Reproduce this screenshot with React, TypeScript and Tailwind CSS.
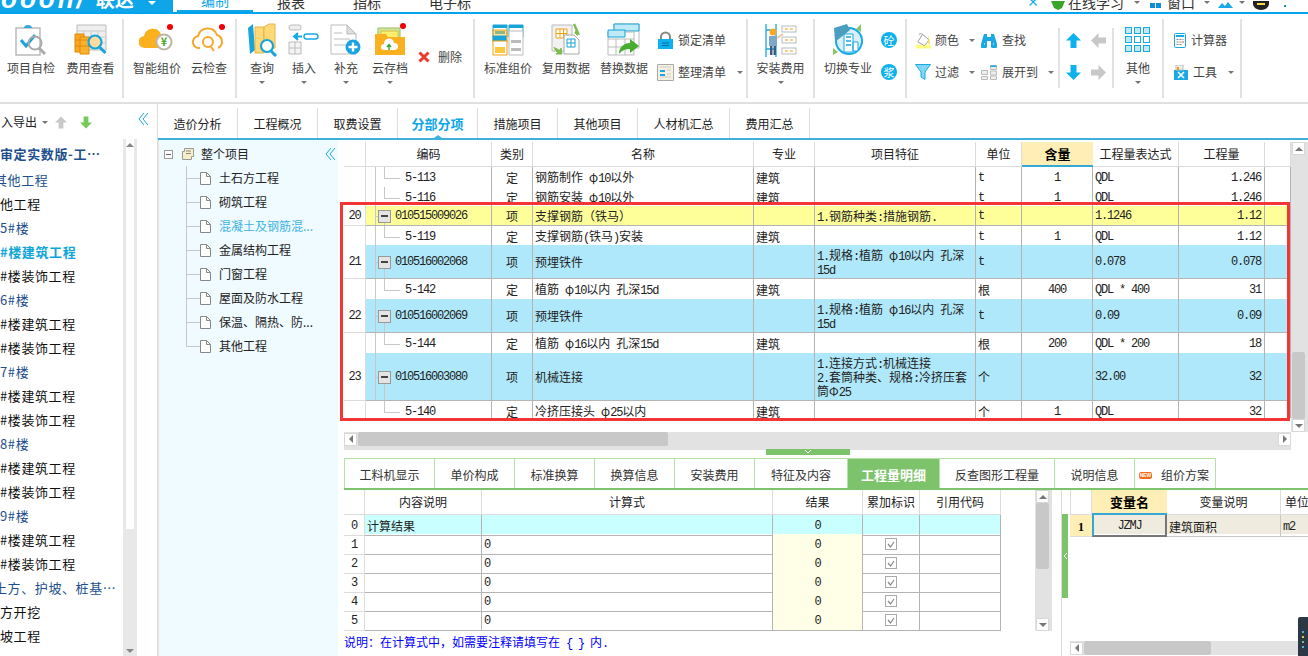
import { ReactNode } from "react";

// text in the grids: CJK at 12px, latin in a mono face squeezed to 6px per char
function Sun({ text }: { text: string }) {
  const parts = text.match(/[\x20-\x7e]+|[^\x20-\x7e]+/g) || [];
  return (
    <>
      {parts.map((p, i) =>
        /^[\x20-\x7e]/.test(p) ? (
          <span key={i} className="font-['Liberation_Mono',monospace] text-[12px] tracking-[-1.2px] whitespace-pre">
            {p}
          </span>
        ) : (
          <span key={i}>{p}</span>
        )
      )}
    </>
  );
}

const Caret = ({ className = "" }: { className?: string }) => (
  <span className={`inline-block w-0 h-0 border-x-[3px] border-t-[3px] border-x-transparent border-t-[#777] ${className}`} />
);

/* ---------- ribbon icons ---------- */
const Dot = ({ x, y }: { x: number; y: number }) => <circle cx={x} cy={y} r="3" fill="#f00000" />;

const IconCheck = () => (
  <svg width="34" height="34" viewBox="0 0 34 34" fill="none">
    <path d="M2 5h24v27H2z" fill="#fff" stroke="#bbb" strokeWidth="1.5" />
    <path d="M10 5c0-4 8-4 8 0z" fill="#29a9e0" />
    <path d="M7 17l5 6 9-11" stroke="#1aa3e0" strokeWidth="3" />
    <circle cx="21" cy="20" r="6.5" stroke="#aaa" strokeWidth="2" />
    <path d="M25 25l6 6" stroke="#aaa" strokeWidth="3" />
  </svg>
);
const IconFee = () => (
  <svg width="34" height="34" viewBox="0 0 34 34" fill="none">
    <path d="M3 2h29v25H3z" fill="#eee" stroke="#bbb" />
    <path d="M3 8h29M3 14h29M3 20h29M10 8v19M17 8v19M24 8v19" stroke="#ccc" />
    <path d="M1 11h9v18H1z" fill="#f9a825" stroke="#e08a00" />
    <path d="M6 14h9v17H6z" fill="#fbb030" stroke="#e08a00" />
    <path d="M1 17h14M1 23h14" stroke="#e08a00" />
    <circle cx="21" cy="19" r="6.5" fill="#fcdca0" stroke="#18a4d8" strokeWidth="2.2" />
    <path d="M25.5 24l6 6" stroke="#18a4d8" strokeWidth="3" />
  </svg>
);
const IconSmart = () => (
  <svg width="36" height="34" viewBox="0 0 36 34" fill="none">
    <path d="M6 25a6 6 0 0 1-1-12 9 9 0 0 1 17-2 7 7 0 0 1 8 7l-6 7z" fill="#fbb01f" />
    <circle cx="25" cy="19" r="7.5" fill="#fff" stroke="#bdb8a6" strokeWidth="2" />
    <text x="25" y="23" textAnchor="middle" fontSize="11" fill="#52a52b" fontWeight="700">¥</text>
    <Dot x={31} y={4} />
  </svg>
);
const IconCloudCheck = () => (
  <svg width="36" height="34" viewBox="0 0 36 34" fill="none">
    <path d="M9 25a6 6 0 0 1-2-12 10 10 0 0 1 19-1 7 7 0 0 1 1 13" stroke="#f7a72c" strokeWidth="2" />
    <circle cx="17" cy="19" r="5" stroke="#f7a72c" strokeWidth="2" />
    <path d="M20 24l3 4" stroke="#f7a72c" strokeWidth="2" />
    <Dot x={31} y={4} />
  </svg>
);
const IconBooks = () => (
  <svg width="32" height="34" viewBox="0 0 32 34" fill="none">
    <path d="M2 5l5-4 2 26-5 4z" fill="#18a4d8" />
    <path d="M9 4h9v26H9z" fill="#ffd978" stroke="#e5b34a" />
    <path d="M18 4l5-3h6v24H18z" fill="#ffd978" stroke="#e5b34a" />
    <circle cx="21" cy="23" r="6" fill="#fff" stroke="#18a4d8" strokeWidth="2.2" />
    <path d="M25 28l5 5" stroke="#18a4d8" strokeWidth="3" />
  </svg>
);
const IconInsert = () => (
  <svg width="32" height="32" viewBox="0 0 32 32" fill="none">
    <rect x="1" y="1" width="12" height="5" rx="2" fill="#eee" stroke="#bbb" />
    <rect x="16" y="10" width="14" height="5" rx="2.5" fill="#fff" stroke="#19a9e5" strokeWidth="1.4" />
    <path d="M14 12.5H7M10 9l-4 3.5L10 16" stroke="#19a9e5" strokeWidth="2" fill="#19a9e5" />
    <path d="M1 18h12v12H1zM1 24h12M7 18v12" stroke="#bbb" fill="#f4f4f4" />
  </svg>
);
const IconSupplement = () => (
  <svg width="34" height="34" viewBox="0 0 34 34" fill="none">
    <path d="M2 2h16l9 9v20H2z" fill="#fff" stroke="#bbb" />
    <path d="M18 2v9h9z" fill="#ddd" stroke="#bbb" />
    <path d="M5 10h8M5 16h16M5 22h12" stroke="#ddd" strokeWidth="2" />
    <circle cx="24" cy="24" r="7.5" fill="#1aa3e0" />
    <path d="M24 19.5v9M19.5 24h9" stroke="#fff" strokeWidth="2.4" />
  </svg>
);
const IconArchive = () => (
  <svg width="34" height="34" viewBox="0 0 34 34" fill="none">
    <path d="M5 5h22v14H5z" fill="#cfe8a0" stroke="#9dbb63" />
    <path d="M8 8h17v14H8z" fill="#ffef6e" stroke="#d9bc3a" />
    <path d="M2 11h11l2 3h17v18H2z" fill="#fbb01f" />
    <path d="M11 27a3 3 0 0 1 0-6 5 5 0 0 1 10-1 3.5 3.5 0 0 1 1 7z" fill="#fff" />
    <path d="M16 27v-5M14 24l2-2.5 2 2.5" stroke="#2aa52b" strokeWidth="1.3" />
    <Dot x={30} y={3} />
  </svg>
);
const IconTemplate = () => (
  <svg width="32" height="32" viewBox="0 0 32 32" fill="none">
    <path d="M1 1h14v12H1z" fill="#fff" stroke="#18a4d8" />
    <path d="M1 1h14v3H1zM3 7h10v3H3z" fill="#18a4d8" />
    <path d="M1 6h14v12H1z" fill="#ffc93d" fillOpacity=".5" stroke="#f0a010" />
    <path d="M17 1h14v12H17z" fill="#fff" stroke="#18a4d8" />
    <path d="M17 1h14v3H17zM19 7h10v3H19z" fill="#18a4d8" />
    <path d="M17 7h14v24H17z" fill="#fff" stroke="#bbb" />
    <path d="M19 16h10v3H19zM19 24h10v3H19z" fill="#bbb" />
    <path d="M1 12h13v5H1z" fill="#18a4d8" stroke="#18a4d8" />
    <path d="M1 17h14v14H1z" fill="#fff" stroke="#f0a010" />
    <path d="M3 23h10v6H3z" fill="#ffc93d" />
  </svg>
);
const IconReuse = () => (
  <svg width="32" height="34" viewBox="0 0 32 34" fill="none">
    <path d="M2 2h20v26H2z" fill="#f2f2f2" stroke="#bbb" />
    <path d="M6 6h11v9H6zM6 10.5h11M10 6v9M13.5 6v9" stroke="#f0a010" fill="#fff" />
    <path d="M14 12h10l5 5v14H14z" fill="#fff" stroke="#aaa" />
    <path d="M17 16h8v8h-8zM17 20h8M21 16v8" stroke="#18a4d8" />
    <path d="M24 1l4 9-3-1a14 14 0 0 1 3 3" stroke="#7dbb4f" strokeWidth="2.4" />
    <path d="M4 24a12 12 0 0 0 4 6l-2 1h6l-1-6-1 2" fill="#7dbb4f" stroke="#7dbb4f" />
  </svg>
);
const IconReplace = () => (
  <svg width="34" height="34" viewBox="0 0 34 34" fill="none">
    <path d="M7 1h25v24H7z" fill="#fff" stroke="#bbb" />
    <path d="M7 1h25v7H7z" fill="#bfe9f5" stroke="#18a4d8" />
    <path d="M1 9h26v23H1z" fill="#fff" stroke="#bbb" />
    <path d="M1 16h26M1 24h26M9 16v16M18 16v16" stroke="#bbb" />
    <path d="M1 7h17v7H1z" fill="#bfe9f5" stroke="#18a4d8" />
    <path d="M12 31c0-7 5-11 11-11v-4l9 7-9 7v-4c-4 0-8 1-11 5z" fill="#46ad2f" />
  </svg>
);
const IconLock = () => (
  <svg width="17" height="18" viewBox="0 0 17 18" fill="none">
    <path d="M4 9V6a4.5 4.5 0 0 1 9 0v3" stroke="#888" strokeWidth="2" />
    <path d="M1 8h15v10H1z" fill="#0db1ee" />
    <path d="M5 12h7M5 14.5h7" stroke="#0a6d99" strokeWidth="1.2" />
  </svg>
);
const IconTidy = () => (
  <svg width="17" height="17" viewBox="0 0 17 17" fill="none">
    <path d="M.5.5h16v16H.5z" fill="#f5f0e0" stroke="#aaa" />
    <path d="M3 3h11M3 13h11" stroke="#ccc" />
    <path d="M3 6h5v2H3zM3 10h5v2H3z" fill="#19a9e5" />
    <path d="M10 6h4M10 10h4" stroke="#ccc" />
  </svg>
);
const IconWorker = () => (
  <svg width="32" height="34" viewBox="0 0 32 34" fill="none">
    <path d="M1 1v33M11 1v33M1 7h10M1 26h10" stroke="#19a9e5" strokeWidth="1.3" />
    <rect x="17" y="3" width="14" height="6" fill="#fff" stroke="#bbb" />
    <rect x="17" y="14" width="14" height="6" fill="#fff" stroke="#bbb" />
    <rect x="17" y="25" width="14" height="6" fill="#fff" stroke="#bbb" />
    <path d="M20 6h3M25 6h3M20 17h3M25 17h3M20 28h3M25 28h3" stroke="#f0a010" />
    <circle cx="8" cy="9" r="3.5" fill="#f9a825" />
    <path d="M4 13h8v10H4z" fill="#7ea7c9" />
    <path d="M12 15l6-4" stroke="#e8c8a0" strokeWidth="2" />
    <path d="M5 23h2.5v9H5zM8.5 23H11v9H8.5z" fill="#3a5f85" />
  </svg>
);
const IconSwitch = () => (
  <svg width="34" height="34" viewBox="0 0 34 34" fill="none">
    <circle cx="18" cy="18" r="13" fill="#d9f0fa" stroke="#19a9e5" strokeWidth="2" />
    <path d="M3 5l13-4 3 6-15 12z" fill="#4c9ebf" />
    <path d="M13 11h9v18h-9zM22 19h5v9h-5z" fill="#fff" stroke="#19a9e5" />
    <path d="M15 14h5M15 18h5M15 22h5" stroke="#19a9e5" strokeWidth="1.5" />
    <path d="M30 1v8l-5-3zM2 32v-7l5 4z" fill="#8cc46b" />
  </svg>
);
const IconBucket = () => (
  <svg width="17" height="17" viewBox="0 0 17 17" fill="none">
    <path d="M1 13h16v4H1z" fill="#ffff80" />
    <path d="M8 2l7 6-5 6-7-4z" fill="#fff" stroke="#999" />
    <path d="M8 2a3 3 0 0 0-4 0" stroke="#999" />
    <path d="M14 2l2 10h-2z" fill="#ffd94a" />
  </svg>
);
const IconBinoculars = () => (
  <svg width="16" height="15" viewBox="0 0 16 15" fill="#19a9e5">
    <path d="M3 1h3v3h4V1h3l3 10a3 3 0 0 1-6 3V8H6v6a3 3 0 0 1-6-3z" />
    <path d="M3 11h1M12 11h1" stroke="#fff" />
  </svg>
);
const IconFunnel = () => (
  <svg width="16" height="16" viewBox="0 0 16 16" fill="none">
    <path d="M.5.5h15L10 8v7.5L6 13V8z" fill="#7fd6f5" stroke="#19a9e5" />
  </svg>
);
const IconExpand = () => (
  <svg width="16" height="15" viewBox="0 0 16 15" fill="none">
    <path d="M.5 5.5h6v4h-6zM.5 11.5h6v3h-6zM9.5.5h6v4h-6zM9.5 6h6v4h-6zM9.5 11h6v3.5h-6z" fill="#eee" stroke="#bbb" />
    <path d="M9.5.5h6V2h-6z" fill="#19a9e5" />
  </svg>
);
const Arrow = ({ dir, color }: { dir: "up" | "down" | "left" | "right"; color: string }) => {
  const rot = { up: "", down: "rotate-180", left: "-rotate-90", right: "rotate-90" }[dir];
  return (
    <svg width="15" height="15" viewBox="0 0 15 15" className={rot}>
      <path d="M7.5 0L15 7.5h-4.5V15h-6V7.5H0z" fill={color} />
    </svg>
  );
};
const IconOther = () => (
  <svg width="26" height="26" viewBox="0 0 26 26">
    {[0, 9, 18].map((y) =>
      [0, 9, 18].map((x) => (
        <rect key={`${x}-${y}`} x={x + 0.5} y={y + 0.5} width="6" height="6" fill={(x === 0 || y === 0 || y === 18) && !(x === 18 && y === 9) && !(y === 9 && x === 9) ? "#bfe9f5" : "#fff"} stroke="#19a9e5" />
      ))
    )}
  </svg>
);
const IconCalc = () => (
  <svg width="12" height="15" viewBox="0 0 12 15" fill="none">
    <rect x=".5" y=".5" width="11" height="14" rx="1" fill="#fff" stroke="#19a9e5" />
    <path d="M2 2h8v2H2z" fill="#19a9e5" />
    <path d="M2.5 6.5h2M5.5 6.5h2M8.5 6.5h1M2.5 9h2M5.5 9h2M8.5 9h1M2.5 11.5h2M5.5 11.5h2" stroke="#888" />
    <path d="M8.5 9h1" stroke="#f00" />
  </svg>
);
const IconTools = () => (
  <svg width="14" height="15" viewBox="0 0 14 15" fill="none">
    <path d="M0 5h14v10H0z" fill="#19a9e5" />
    <path d="M2 0h7v5H2z" fill="#eee" stroke="#bbb" />
    <path d="M4 2v3" stroke="#f0a010" strokeWidth="2" />
    <path d="M4 7l6 6M10 7l-6 6" stroke="#fff" strokeWidth="1.6" />
  </svg>
);
const IconDelete = () => (
  <svg width="12" height="12" viewBox="0 0 12 12">
    <path d="M1.5 1.5l9 9M10.5 1.5l-9 9" stroke="#ef3b2d" strokeWidth="3" />
  </svg>
);

/* ---------- ribbon pieces ---------- */
function Big({ icon, label, caret, w }: { icon: ReactNode; label: string; caret?: boolean; w: string }) {
  return (
    <div className={`flex flex-col items-center pt-[3px] ${w}`}>
      <div className="h-[35px] flex items-center justify-center">{icon}</div>
      <div className="mt-[3px] h-[16px] leading-[16px] whitespace-nowrap">{label}</div>
      {caret && <Caret className="mt-[5px]" />}
    </div>
  );
}

function Small({ icon, label, caret, gap = "gap-[4px]", caretGap = "ml-[7px]" }: { icon: ReactNode; label: string; caret?: boolean; gap?: string; caretGap?: string }) {
  return (
    <div className={`h-[20px] flex items-center whitespace-nowrap ${gap}`}>
      {icon}
      <span>{label}</span>
      {caret && <Caret className={caretGap} />}
    </div>
  );
}

function Ribbon() {
  return (
    <div className="flex h-[90px] pt-[5px] border-b-2 border-[#e0e0e0] text-[12px] text-[#444]">
      <div className="w-[124px] h-[79px] flex border-r-2 border-[#e2e2e2] pl-[1px]">
        <Big w="w-[60px]" icon={<IconCheck />} label="项目自检" />
        <Big w="w-[59px]" icon={<IconFee />} label="费用查看" />
      </div>
      <div className="w-[113px] h-[79px] flex border-r-2 border-[#e2e2e2] pl-[7px]">
        <Big w="w-[52px]" icon={<IconSmart />} label="智能组价" />
        <Big w="w-[52px]" icon={<IconCloudCheck />} label="云检查" />
      </div>
      <div className="w-[238px] h-[79px] flex border-r-2 border-[#e2e2e2] pl-[4px]">
        <Big w="w-[42px]" icon={<IconBooks />} label="查询" caret />
        <Big w="w-[42px]" icon={<IconInsert />} label="插入" caret />
        <Big w="w-[42px]" icon={<IconSupplement />} label="补充" caret />
        <Big w="w-[46px]" icon={<IconArchive />} label="云存档" caret />
        <div className="ml-[5px] mt-[28px] h-[20px] flex items-center gap-[8px]">
          <IconDelete />
          <span>删除</span>
        </div>
      </div>
      <div className="w-[273px] h-[79px] flex border-r-2 border-[#e2e2e2] pl-[4px]">
        <Big w="w-[58px]" icon={<IconTemplate />} label="标准组价" />
        <Big w="w-[58px]" icon={<IconReuse />} label="复用数据" />
        <Big w="w-[58px]" icon={<IconReplace />} label="替换数据" />
        <div className="ml-[4px] pt-[11px] flex flex-col gap-[12px]">
          <Small icon={<IconLock />} label="锁定清单" />
          <Small icon={<IconTidy />} label="整理清单" caret />
        </div>
      </div>
      <div className="w-[67px] h-[79px] flex border-r-2 border-[#e2e2e2] justify-center">
        <Big w="w-[60px]" icon={<IconWorker />} label="安装费用" caret />
      </div>
      <div className="w-[92px] h-[79px] flex border-r-2 border-[#e2e2e2] pl-[3px]">
        <Big w="w-[60px]" icon={<IconSwitch />} label="切换专业" />
        <div className="ml-[3px] pt-[13px] flex flex-col gap-[16px]">
          <span className="w-[16px] h-[16px] rounded-full bg-[#0db1ee] text-white text-[11px] leading-[16px] text-center">砼</span>
          <span className="w-[16px] h-[16px] rounded-full bg-[#0db1ee] text-white text-[11px] leading-[16px] text-center">浆</span>
        </div>
      </div>
      <div className="w-[151px] h-[79px] flex pl-[8px] pt-[11px] gap-[6px]">
        <div className="w-[60px] flex flex-col gap-[12px]">
          <Small icon={<IconBucket />} label="颜色" caret caretGap="ml-[6px]" />
          <Small icon={<IconFunnel />} label="过滤" caret caretGap="ml-[6px]" />
        </div>
        <div className="flex flex-col gap-[12px]">
          <Small icon={<IconBinoculars />} label="查找" gap="gap-[5px]" />
          <Small icon={<IconExpand />} label="展开到" gap="gap-[5px]" caret caretGap="ml-[5px]" />
        </div>
      </div>
      <div className="w-[56px] h-[60px] mt-[9px] border-x-2 border-[#e2e2e2] pl-[6px] pt-[5px] flex flex-col gap-[17px]">
        <div className="flex gap-[10px]">
          <Arrow dir="up" color="#0db1ee" />
          <Arrow dir="left" color="#c8c8c8" />
        </div>
        <div className="flex gap-[10px]">
          <Arrow dir="down" color="#0db1ee" />
          <Arrow dir="right" color="#c8c8c8" />
        </div>
      </div>
      <div className="w-[50px] h-[79px] flex justify-center border-r-2 border-[#e2e2e2]">
        <Big w="w-[40px]" icon={<IconOther />} label="其他" caret />
      </div>
      <div className="w-[78px] h-[79px] pl-[10px] pt-[11px] flex flex-col gap-[12px] border-r-2 border-[#e2e2e2]">
        <Small icon={<IconCalc />} label="计算器" gap="gap-[5px]" />
        <Small icon={<IconTools />} label="工具" gap="gap-[5px]" caret caretGap="ml-[6px]" />
      </div>
    </div>
  );
}

function TopBar() {
  return (
    <div className="h-[14px] border-b-2 border-[#00a4ec] flex overflow-hidden text-[14px]">
      <div className="w-[173px] h-[12px] bg-[#0ea6e8] text-white flex items-end overflow-hidden pl-[1px]">
        <span className="mb-[2px] h-[22px] leading-[22px] italic font-bold text-[26px] tracking-[3px] font-['Liberation_Sans',sans-serif] whitespace-nowrap">ooon/</span>
        <span className="ml-[9px] mb-[1px] h-[24px] leading-[24px] font-bold text-[19px] whitespace-nowrap">联达</span>
        <span className="ml-[14px] mb-[7px] w-0 h-0 border-x-[4px] border-t-[4px] border-x-transparent border-t-white" />
      </div>
      {[
        { t: "编制", c: "ml-[4px] w-[76px] text-[#0ea6e8] border-b-2 border-[#0ea6e8]" },
        { t: "报表", c: "w-[76px] text-[#333]" },
        { t: "指标", c: "w-[76px] text-[#333]" },
        { t: "电子标", c: "w-[90px] text-[#333]" },
      ].map((x) => (
        <div key={x.t} className={`h-[12px] flex items-end justify-center overflow-hidden ${x.c}`}>
          <span className="h-[18px] leading-[18px] mb-[1px] flex-none">{x.t}</span>
        </div>
      ))}
      <div className="ml-auto h-[12px] flex items-end overflow-hidden text-[#333] text-[14px]">
        <span className="w-[13px] h-[8px] mb-[3px] mr-[10px] text-[#19a9e5] font-bold text-[12px] leading-[2px]">×</span>
        <svg width="16" height="9" viewBox="0 0 16 9" className="mb-[2px] mr-[2px]"><path d="M1 0h14l-3 7-4 2-4-2z" fill="#3aa52b" /></svg>
        <span className="h-[18px] leading-[18px] mb-[1px] flex-none">在线学习</span>
        <Caret className="ml-[10px] mb-[8px]" />
        <span className="ml-[10px] mb-[4px] w-[5px] h-[5px] bg-[#0d8fd8]" />
        <span className="ml-[1px] mb-[4px] w-[5px] h-[5px] bg-[#0d8fd8]" />
        <span className="ml-[6px] h-[18px] leading-[18px] mb-[1px] flex-none">窗口</span>
        <Caret className="ml-[9px] mb-[8px]" />
        <svg width="15" height="6" viewBox="0 0 15 6" className="ml-[8px] mb-[4px]"><path d="M0 6l4-5 3 3 3-4 5 6z" fill="#19a9e5" /></svg>
        <Caret className="ml-[6px] mb-[8px]" />
        <svg width="16" height="9" viewBox="0 0 16 9" className="ml-[8px] mb-[2px]"><path d="M0 0h16v3a8 6 0 0 1-16 0z" fill="#222" /><path d="M4 2h8v2H4z" fill="#ffd94a" /></svg>
        <span className="ml-[15px] mb-[5px] w-[2px] h-[2px] bg-[#0d8fd8]" />
        <span className="mr-[5px] ml-[11px] mb-[8px]"><Caret /></span>
      </div>
    </div>
  );
}

/* ---------- left project list ---------- */
const sideItems = [
  { t: "审定实数版-工…", c: "font-bold text-[#1e4f8c] mb-[2px]" },
  { t: "其他工程", c: "text-[#1e4f8c] ml-[-6px]" },
  { t: "他工程", c: "text-[#111]" },
  { t: "5#楼", c: "text-[#1e4f8c]" },
  { t: "#楼建筑工程", c: "font-bold text-[#0ea6d8]" },
  { t: "#楼装饰工程", c: "text-[#111]" },
  { t: "6#楼", c: "text-[#1e4f8c]" },
  { t: "#楼建筑工程", c: "text-[#111]" },
  { t: "#楼装饰工程", c: "text-[#111]" },
  { t: "7#楼", c: "text-[#1e4f8c]" },
  { t: "#楼建筑工程", c: "text-[#111]" },
  { t: "#楼装饰工程", c: "text-[#111]" },
  { t: "8#楼", c: "text-[#1e4f8c]" },
  { t: "#楼建筑工程", c: "text-[#111]" },
  { t: "#楼装饰工程", c: "text-[#111]" },
  { t: "9#楼", c: "text-[#1e4f8c]" },
  { t: "#楼建筑工程", c: "text-[#111]" },
  { t: "#楼装饰工程", c: "text-[#111]" },
  { t: "土方、护坡、桩基…", c: "text-[#1e4f8c] ml-[-6px]" },
  { t: "方开挖", c: "text-[#111]" },
  { t: "坡工程", c: "text-[#111]" },
];

const Collapse = ({ color = "#19a9e5" }: { color?: string }) => (
  <svg width="11" height="14" viewBox="0 0 11 14" fill="none">
    <path d="M6 1L1 7l5 6M10 1L5 7l5 6" stroke={color} />
  </svg>
);

function LeftPanel() {
  return (
    <div className="w-[158px] flex-none border-r border-[#dedede] flex flex-col">
      <div className="h-[35px] flex-none flex items-center text-[12px] text-[#222] pt-[1px]">
        <span className="ml-[1px]">入导出</span>
        <Caret className="ml-[5px]" />
        <svg width="12" height="13" viewBox="0 0 15 15" className="ml-[7px]"><path d="M7.5 0L15 7.5h-4.5V15h-6V7.5H0z" fill="#c8c8c8" /></svg>
        <svg width="12" height="13" viewBox="0 0 15 15" className="ml-[13px] rotate-180"><path d="M7.5 0L15 7.5h-4.5V15h-6V7.5H0z" fill="#76c95a" /></svg>
        <span className="ml-[46px] -mt-[6px]"><Collapse /></span>
      </div>
      <div className="flex-1 flex min-h-0">
        <div className="w-[123px] overflow-hidden pt-[3px] text-[13px] tracking-[0.6px]">
          {sideItems.map((x, i) => (
            <div key={i} className={`h-[24px] leading-[24px] whitespace-nowrap ${x.c}`}>{x.t}</div>
          ))}
        </div>
        <div className="w-[14px] bg-[#e8e8e8] flex flex-col items-center">
          <div className="w-[8px] h-[390px] bg-white flex justify-center pt-[4px]">
            <span className="w-0 h-0 border-x-[4px] border-b-[4px] border-x-transparent border-b-[#888]" />
          </div>
          <span className="mt-auto mb-[3px] w-0 h-0 border-x-[4px] border-t-[4px] border-x-transparent border-t-[#888]" />
        </div>
      </div>
    </div>
  );
}

/* ---------- project tree ---------- */
const DocIcon = () => (
  <svg width="11" height="13" viewBox="0 0 11 13" fill="none">
    <path d="M.5.5h6l4 4v8H.5zM6.5.5v4h4" stroke="#888" fill="#fff" />
  </svg>
);

const treeItems = ["土石方工程", "砌筑工程", "混凝土及钢筋混...", "金属结构工程", "门窗工程", "屋面及防水工程", "保温、隔热、防...", "其他工程"];

function TreePanel() {
  return (
    <div className="w-[185px] flex-none flex">
      <div className="w-[180px] bg-[#f0fbff] border-l border-[#e4e4e4] text-[12px] text-[#222]">
        <div className="h-[26px] pt-[2px] flex items-center pl-[5px] relative">
          <span className="w-[9px] h-[9px] border border-[#999] flex items-center justify-center bg-white">
            <span className="w-[5px] h-px bg-[#666]" />
          </span>
          <svg width="12" height="12" viewBox="0 0 12 12" fill="none" className="ml-[9px]"><path d="M.5 3.5h2V.5h9v8h-2v3H.5z" fill="#f7eec8" stroke="#999" /><path d="M4 3h5M4 5.5h5" stroke="#888" /></svg>
          <span className="ml-[7px]">整个项目</span>
          <span className="absolute right-[2px] top-[7px]"><Collapse /></span>
        </div>
        <div className="relative">
          <span className="absolute left-[27px] top-0 w-px h-[180px] bg-[#c8c8c8]" />
          {treeItems.map((t, i) => (
            <div key={t} className="h-[24px] flex items-center pl-[27px]">
              <span className="w-[14px] h-px bg-[#c8c8c8]" />
              <DocIcon />
              <span className={`ml-[8px] whitespace-nowrap ${i === 2 ? "text-[#3fb3e6]" : ""}`}>{t}</span>
            </div>
          ))}
        </div>
      </div>
    </div>
  );
}

/* ---------- scrollbars ---------- */
const ScrollBtn = ({ dir }: { dir: "up" | "down" | "left" | "right" }) => {
  const arrow = {
    up: "border-x-[4px] border-b-[4px] border-x-transparent border-b-[#777]",
    down: "border-x-[4px] border-t-[4px] border-x-transparent border-t-[#777]",
    left: "border-y-[4px] border-r-[4px] border-y-transparent border-r-[#777]",
    right: "border-y-[4px] border-l-[4px] border-y-transparent border-l-[#777]",
  }[dir];
  return (
    <span className="w-[13px] h-[13px] flex-none bg-white border border-[#d8d8d8] flex items-center justify-center">
      <span className={`w-0 h-0 ${arrow}`} />
    </span>
  );
};

/* ---------- main grid ---------- */
type Row = { no?: string; code: string; type: string; name: string; major?: string; feat?: string; unit: string; qty?: string; expr: string; amt: string; h: string; bg: string; parent?: boolean; last?: boolean };

const rows: Row[] = [
  { code: "5-113", type: "定", name: "钢筋制作 φ10以外", major: "建筑", unit: "t", qty: "1", expr: "QDL", amt: "1.246", h: "h-[20px]", bg: "bg-white" },
  { code: "5-116", type: "定", name: "钢筋安装 φ10以外", major: "建筑", unit: "t", qty: "1", expr: "QDL", amt: "1.246", h: "h-[19px]", bg: "bg-white" },
  { no: "20", code: "010515009026", type: "项", name: "支撑钢筋（铁马）", feat: "1.钢筋种类:措施钢筋.", unit: "t", expr: "1.1246", amt: "1.12", h: "h-[20px]", bg: "bg-[#ffff99]", parent: true },
  { code: "5-119", type: "定", name: "支撑钢筋(铁马)安装", major: "建筑", unit: "t", qty: "1", expr: "QDL", amt: "1.12", h: "h-[19px]", bg: "bg-white" },
  { no: "21", code: "010516002068", type: "项", name: "预埋铁件", feat: "1.规格:植筋 φ10以内 孔深\n15d", unit: "t", expr: "0.078", amt: "0.078", h: "h-[34px]", bg: "bg-[#afe8fb]", parent: true },
  { code: "5-142", type: "定", name: "植筋 φ10以内 孔深15d", major: "建筑", unit: "根", qty: "400", expr: "QDL * 400", amt: "31", h: "h-[20px]", bg: "bg-white" },
  { no: "22", code: "010516002069", type: "项", name: "预埋铁件", feat: "1.规格:植筋 φ16以内 孔深\n15d", unit: "t", expr: "0.09", amt: "0.09", h: "h-[34px]", bg: "bg-[#afe8fb]", parent: true },
  { code: "5-144", type: "定", name: "植筋 φ16以内 孔深15d", major: "建筑", unit: "根", qty: "200", expr: "QDL * 200", amt: "18", h: "h-[20px]", bg: "bg-white" },
  { no: "23", code: "010516003080", type: "项", name: "机械连接", feat: "1.连接方式:机械连接\n2.套筒种类、规格:冷挤压套\n筒Φ25", unit: "个", expr: "32.00", amt: "32", h: "h-[48px]", bg: "bg-[#afe8fb]", parent: true },
  { code: "5-140", type: "定", name: "冷挤压接头 φ25以内", major: "建筑", unit: "个", qty: "1", expr: "QDL", amt: "32", h: "h-[20px]", bg: "bg-white", last: true },
];

const gridCols = "grid grid-cols-[22px_126px_41px_221px_61px_161px_46px_71px_86px_86px_26px]";
const cell = "border-r border-b border-[#b4b4b4] flex items-center min-w-0 pt-[1px]";

function MainGrid() {
  const heads = ["", "编码", "类别", "名称", "专业", "项目特征", "单位", "含量", "工程量表达式", "工程量", ""];
  return (
    <div className="relative h-[290px] flex">
      <div className="w-[947px] flex-none text-[12px] text-[#222] overflow-hidden">
        <div className={`${gridCols} h-[25px]`}>
          {heads.map((h, i) =>
            h === "含量" ? (
              <div key={i} className="bg-[#ffefb6] border-b-2 border-[#36a8d8] font-bold text-[13px] text-black flex items-center justify-center">{h}</div>
            ) : (
              <div key={i} className="border-r border-b border-[#dcdcdc] flex items-center justify-center">{h}</div>
            )
          )}
        </div>
        <div className="h-[251px] overflow-hidden">
          {rows.map((r) => (
            <div key={r.code} className={`${gridCols} ${r.h}`}>
              <div className="border-r border-b border-[#dcdcdc] bg-white pt-[1px] flex items-center justify-center"><Sun text={r.no || ""} /></div>
              <div className={`${cell} ${r.bg} relative ${r.parent ? "pl-[12px] gap-[4px]" : "pl-[39px]"}`}>
                {!r.last && <span className="absolute left-[9px] top-0 bottom-0 w-px bg-[#c8c8c8]" />}
                {r.parent ? (
                  <>
                    <span className="absolute left-[9px] top-1/2 w-[4px] h-px bg-[#c8c8c8]" />
                    <span className="absolute left-[18px] top-1/2 bottom-0 w-px bg-[#c8c8c8]" />
                    <span className="relative w-[13px] h-[13px] flex-none border border-[#999] bg-[#e4e4e4] flex items-center justify-center">
                      <span className="w-[7px] h-[2px] bg-[#444]" />
                    </span>
                    <Sun text={r.code} />
                  </>
                ) : (
                  <>
                    <span className="absolute left-[18px] top-0 h-1/2 w-px bg-[#c8c8c8]" />
                    <span className="absolute left-[18px] top-1/2 w-[16px] h-px bg-[#c8c8c8]" />
                    <Sun text={r.code} />
                  </>
                )}
              </div>
              <div className={`${cell} ${r.bg} justify-center`}>{r.type}</div>
              <div className={`${cell} ${r.bg} pl-[2px] whitespace-nowrap`}><span><Sun text={r.name} /></span></div>
              <div className={`${cell} ${r.bg} pl-[2px]`}>{r.major}</div>
              <div className={`${cell} ${r.bg} pl-[2px]`}>
                <div className="whitespace-nowrap">
                  {(r.feat || "").split("\n").map((l) => (
                    <div key={l} className="h-[14px] leading-[14px]"><Sun text={l} /></div>
                  ))}
                </div>
              </div>
              <div className={`${cell} ${r.bg} pl-[2px]`}><Sun text={r.unit} /></div>
              <div className={`${cell} ${r.bg} justify-center`}><Sun text={r.qty || ""} /></div>
              <div className={`${cell} ${r.bg} pl-[2px]`}><Sun text={r.expr} /></div>
              <div className={`${cell} ${r.bg} justify-end pr-[3px]`}><Sun text={r.amt} /></div>
              <div className={`${cell} ${r.bg}`} />
            </div>
          ))}
        </div>
      </div>
      <div className="w-[17px] flex-none bg-[#e2e2e2] flex flex-col pl-[1px]">
        <ScrollBtn dir="up" />
        <div className="flex-1" />
        <div className="w-[13px] h-[67px] bg-[#c8c8c8] rounded-[2px]" />
        <ScrollBtn dir="down" />
      </div>
      {/* red annotation drawn over the screenshot */}
      <div className="absolute left-[-4px] top-[60px] w-[950px] h-[219px] border-[3px] border-[#f33535] pointer-events-none" />
    </div>
  );
}

function HScroll() {
  return (
    <div className="h-[14px] w-[947px] bg-[#e2e2e2] flex items-center">
      <ScrollBtn dir="left" />
      <div className="ml-[1px] w-[310px] h-[14px] bg-[#c8c8c8] rounded-[2px]" />
      <div className="flex-1" />
      <ScrollBtn dir="right" />
    </div>
  );
}

/* ---------- detail tabs ---------- */
const detailTabs = [
  { t: "工料机显示", w: "w-[91px] border-l" },
  { t: "单价构成", w: "w-[80px]" },
  { t: "标准换算", w: "w-[80px]" },
  { t: "换算信息", w: "w-[80px]" },
  { t: "安装费用", w: "w-[80px]" },
  { t: "特征及内容", w: "w-[93px]" },
  { t: "工程量明细", w: "w-[92px] bg-[#7dc36b] text-white font-bold text-[13px]" },
  { t: "反查图形工程量", w: "w-[115px]" },
  { t: "说明信息", w: "w-[80px]" },
];

function DetailTabs() {
  return (
    <div className="h-[32px] border-b-2 border-[#7dc36b] flex text-[12px] text-[#333]">
      {detailTabs.map((x) => (
        <div key={x.t} className={`h-[30px] pt-[3px] border-t border-r border-[#b5e2a8] flex items-center justify-center ${x.w}`}>{x.t}</div>
      ))}
      <div className="w-[81px] h-[30px] pt-[3px] border-t border-r border-[#b5e2a8] flex items-center pl-[4px] gap-[9px]">
        <span className="w-[13px] h-[7px] rounded-[2px] bg-[#f46a1b] text-white text-[5px] leading-[7px] text-center font-bold font-['Liberation_Sans',sans-serif]">NEW</span>
        <span>组价方案</span>
      </div>
    </div>
  );
}

const Check = () => (
  <span className="w-[12px] h-[12px] border border-[#aaa] flex items-center justify-center bg-white">
    <svg width="8" height="7" viewBox="0 0 8 7" fill="none"><path d="M1 3l2.5 3L7 1" stroke="#888" strokeWidth="1.2" /></svg>
  </span>
);

const lowerCols = "grid grid-cols-[21px_117px_291px_90px_57px_81px]";
const lc = "border-r border-b border-[#b4b4b4] flex items-center";

function LowerGrid() {
  return (
    <div className="flex h-[141px]">
      <div className="w-[657px] flex-none text-[12px] text-[#222]">
        <div className={`${lowerCols} h-[25px]`}>
          {["", "内容说明", "计算式", "结果", "累加标识", "引用代码"].map((h) => (
            <div key={h} className="border-r border-b border-[#dcdcdc] flex items-center justify-center">{h}</div>
          ))}
        </div>
        <div className={`${lowerCols} h-[19px] bg-[#c9ffff]`}>
          <div className="border-r border-b border-[#dcdcdc] bg-white pt-[2px] flex items-center justify-center"><Sun text="0" /></div>
          <div className={`${lc} pl-[2px] pt-[2px]`}>计算结果</div>
          <div className={lc} />
          <div className={`${lc} justify-center pt-[2px]`}><Sun text="0" /></div>
          <div className={lc} />
          <div className={lc} />
        </div>
        {["1", "2", "3", "4", "5"].map((n) => (
          <div key={n} className={`${lowerCols} h-[19px]`}>
            <div className="border-r border-b border-[#dcdcdc] pt-[2px] flex items-center justify-center"><Sun text={n} /></div>
            <div className={lc} />
            <div className={`${lc} pl-[2px] pt-[2px]`}><Sun text="0" /></div>
            <div className={`${lc} justify-center bg-[#ffffe8] pt-[2px]`}><Sun text="0" /></div>
            <div className={`${lc} justify-center`}><Check /></div>
            <div className={lc} />
          </div>
        ))}
      </div>
      <div className="ml-[34px] w-[17px] flex-none bg-[#e2e2e2] flex flex-col pl-[1px]">
        <ScrollBtn dir="up" />
        <div className="w-[13px] h-[66px] bg-[#c8c8c8] rounded-[2px]" />
        <div className="flex-1" />
        <ScrollBtn dir="down" />
      </div>
    </div>
  );
}

function VarPanel() {
  return (
    <div className="relative ml-[9px] w-[247px] flex-none border-l border-[#dcdcdc] flex text-[12px] text-[#222] overflow-hidden">
      <div className="w-[6px] h-[84px] mt-[24px] bg-[#7dc36b] flex items-center justify-center">
        <svg width="5" height="8" viewBox="0 0 5 8" fill="none"><path d="M4 1L1 4l3 3" stroke="#fff" /></svg>
      </div>
      <div className="ml-[2px] flex-1 flex flex-col min-w-0">
        <div className="grid grid-cols-[22px_75px_114px_27px] h-[25px]">
          <div className="border-x border-b border-[#dcdcdc]" />
          <div className="bg-[#ffefb6] border-b-2 border-[#36a8d8] font-bold text-[13px] text-black flex items-center justify-center">变量名</div>
          <div className="border-r border-b border-[#dcdcdc] flex items-center justify-center">变量说明</div>
          <div className="border-b border-[#dcdcdc] flex items-center pl-[4px] whitespace-nowrap overflow-hidden">单位</div>
        </div>
        <div className="grid grid-cols-[22px_75px_114px_27px] h-[19px] bg-[#efecdf]">
          <div className="bg-[#ffefb6] border-b border-[#dcdcdc] pt-[2px] flex items-center justify-center font-bold font-['Liberation_Serif',serif] text-black">1</div>
          <div className="border-l-2 border-l-[#36a8d8] border-b-2 border-b-[#777] border-r-2 border-r-[#777] pt-[2px] flex items-center justify-center"><Sun text="JZMJ" /></div>
          <div className="border-r border-b border-[#c8c8c8] pt-[2px] flex items-center pl-[2px]">建筑面积</div>
          <div className="border-b border-[#c8c8c8] pt-[2px] flex items-center pl-[2px]"><Sun text="m2" /></div>
        </div>
        <div className="mt-auto mb-[1px] h-[14px] bg-[#e2e2e2] flex items-center">
          <ScrollBtn dir="left" />
          <div className="ml-[1px] w-[127px] h-[14px] bg-[#c8c8c8] rounded-[2px]" />
        </div>
      </div>
      {/* floating level meter in the corner */}
      <div className="absolute right-0 bottom-0 w-[10px] h-[39px] bg-[#2c3843] rounded-tl-[2px] flex flex-col items-center pt-[14px] gap-[3px]">
        <span className="w-[2px] h-[2px] bg-[#4fb3d9]" />
        <span className="w-[2px] h-[2px] bg-[#d9c84f]" />
        <span className="w-[2px] h-[2px] bg-[#6fc36b]" />
        <span className="w-[2px] h-[2px] bg-[#4fb3d9]" />
      </div>
    </div>
  );
}

export default function App() {
  return (
    <div className="w-[1308px] h-[656px] overflow-hidden bg-white font-['Noto_Sans_CJK_SC','Liberation_Sans',sans-serif] flex flex-col">
      <TopBar />
      <Ribbon />
      <div className="flex-1 flex min-h-0">
        <LeftPanel />
        <div className="flex-1 flex flex-col min-w-0">
          <div className="h-[36px] flex-none pt-[4px] border-b-2 border-[#3db0dd] flex text-[12px] text-[#222]">
            {[
              { t: "造价分析", c: "w-[80px]" },
              { t: "工程概况", c: "w-[80px]" },
              { t: "取费设置", c: "w-[80px]" },
              { t: "分部分项", c: "w-[80px] text-[#0ea6e8] font-bold text-[13px] relative" },
              { t: "措施项目", c: "w-[80px]" },
              { t: "其他项目", c: "w-[80px]" },
              { t: "人材机汇总", c: "w-[92px]" },
              { t: "费用汇总", c: "w-[80px]" },
            ].map((x) => (
              <div key={x.t} className={`h-[30px] pt-[2px] border-r border-[#dedede] flex items-center justify-center ${x.c}`}>
                {x.t}
                {x.t === "分部分项" && (
                  <span className="absolute bottom-0 left-[36px] w-0 h-0 border-x-[4px] border-b-[3px] border-x-transparent border-b-[#3db0dd]" />
                )}
              </div>
            ))}
          </div>
          <div className="flex-1 flex min-h-0">
            <TreePanel />
            <div className="flex-1 min-w-0 pl-px pt-[2px] flex flex-col">
              <MainGrid />
              <HScroll />
              <div className="h-[12px] flex-none">
                <div className="h-[4px] w-[947px] bg-[#e2e2e2]" />
                <div className="-mt-px ml-[422px] w-[84px] h-[6px] bg-[#7dc36b] flex justify-center">
                  <svg width="8" height="5" viewBox="0 0 8 5" fill="none"><path d="M1 1l3 3 3-3" stroke="#fff" /></svg>
                </div>
              </div>
              <DetailTabs />
              <div className="flex-1 flex min-h-0">
                <div className="flex flex-col w-[708px] flex-none">
                  <LowerGrid />
                  <div className="pt-[3px] text-[12px] leading-[16px] text-[#0000ff] whitespace-nowrap"><Sun text="说明：在计算式中，如需要注释请填写在 { } 内." /></div>
                </div>
                <VarPanel />
              </div>
            </div>
          </div>
        </div>
      </div>
    </div>
  );
}
